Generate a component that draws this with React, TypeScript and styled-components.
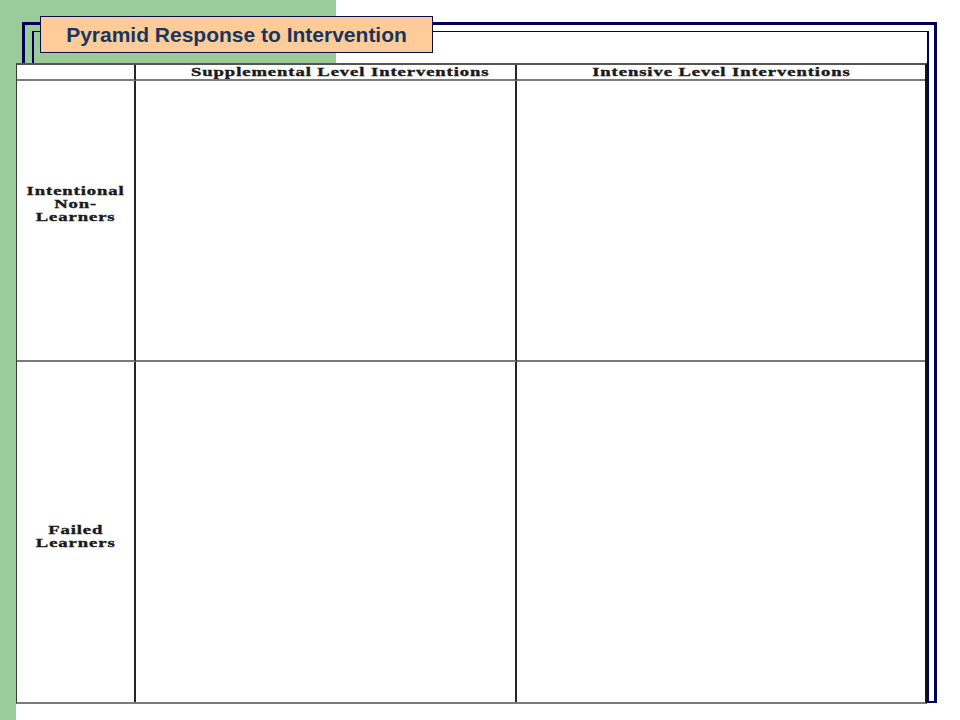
import React from "react";
import styled, { createGlobalStyle } from "styled-components";

const GlobalStyle = createGlobalStyle`
  html, body { margin: 0; padding: 0; background: #ffffff; }
  body { font-family: "Liberation Sans", Arial, sans-serif; }
`;

const GREEN = "#99cc99";
const NAVY = "#000058";

const Slide = styled.div`
  position: relative;
  width: 960px;
  height: 720px;
  overflow: hidden;
  box-sizing: border-box;
  padding: 63px 0 0 16px;
  background:
    linear-gradient(${GREEN}, ${GREEN}) 0 0 / 16px 100% no-repeat,
    linear-gradient(${GREEN}, ${GREEN}) 0 0 / 336px 64px no-repeat,
    #ffffff;
`;

const Frame = styled.div`
  position: absolute;
  left: 22px;
  top: 22px;
  width: 915px;
  height: 681px;
  box-sizing: border-box;
  border: 3px solid ${NAVY};
  border-bottom-width: 2px;
  z-index: 0;

  &::after {
    content: "";
    position: absolute;
    left: 7px;
    top: 6px;
    right: 5px;
    bottom: -2px;
    border-style: solid;
    border-color: ${NAVY};
    border-width: 1.5px 2px 0 2px;
  }
`;

const TitleBox = styled.div`
  position: absolute;
  left: 40px;
  top: 16px;
  width: 393px;
  height: 37px;
  box-sizing: border-box;
  border: 1px solid #0c0c48;
  background: #ffcc99;
  display: flex;
  align-items: center;
  justify-content: center;
  z-index: 3;
`;

const TitleText = styled.h1`
  margin: 0;
  font-family: "Liberation Sans", Arial, sans-serif;
  font-weight: bold;
  font-size: 21px;
  color: #17365d;
`;

const Table = styled.div`
  position: relative;
  z-index: 2;
  width: 911px;
  height: 641px;
  box-sizing: border-box;
  background: #ffffff;
  border-style: solid;
  border-width: 2px 2px 2px 1px;
  border-color: #555555 #151515 #7a7a7a #3a3a3a;
  display: grid;
  grid-template-columns: 119px 381px 1fr;
  grid-template-rows: 16px 281px 1fr;
`;

const Cell = styled.div<{
  $lastCol?: boolean;
  $lastRow?: boolean;
  $shift?: number;
  $indent?: number;
}>`
  box-sizing: border-box;
  border-right: ${(p) => (p.$lastCol ? "none" : "2px solid #262626")};
  border-bottom: ${(p) => (p.$lastRow ? "none" : "2px solid #7a7a7a")};
  display: flex;
  align-items: center;
  justify-content: center;
  padding-top: ${(p) => (p.$shift && p.$shift > 0 ? p.$shift : 0)}px;
  padding-bottom: ${(p) => (p.$shift && p.$shift < 0 ? -p.$shift : 0)}px;
  padding-left: ${(p) => p.$indent ?? 0}px;
  overflow: hidden;
`;

const PrintText = styled.div`
  font-family: "Liberation Serif", "Times New Roman", serif;
  font-weight: bold;
  font-size: 12px;
  line-height: 13px;
  letter-spacing: 0.6px;
  color: #1a1a1a;
  -webkit-text-stroke: 0.35px #1a1a1a;
  text-align: center;
  white-space: nowrap;
  transform: scaleX(1.55);
  transform-origin: center;
`;

const HeaderText = styled(PrintText)`
  line-height: 12px;
`;

export default function App() {
  return (
    <>
      <GlobalStyle />
      <Slide>
        <Frame />
        <TitleBox>
          <TitleText>Pyramid Response to Intervention</TitleText>
        </TitleBox>
        <Table>
          <Cell />
          <Cell $indent={30}>
            <HeaderText>Supplemental Level Interventions</HeaderText>
          </Cell>
          <Cell $lastCol>
            <HeaderText>Intensive Level Interventions</HeaderText>
          </Cell>

          <Cell $shift={-32}>
            <PrintText>
              Intentional
              <br />
              Non-
              <br />
              Learners
            </PrintText>
          </Cell>
          <Cell />
          <Cell $lastCol />

          <Cell $lastRow $shift={10}>
            <PrintText>
              Failed
              <br />
              Learners
            </PrintText>
          </Cell>
          <Cell $lastRow />
          <Cell $lastRow $lastCol />
        </Table>
      </Slide>
    </>
  );
}
